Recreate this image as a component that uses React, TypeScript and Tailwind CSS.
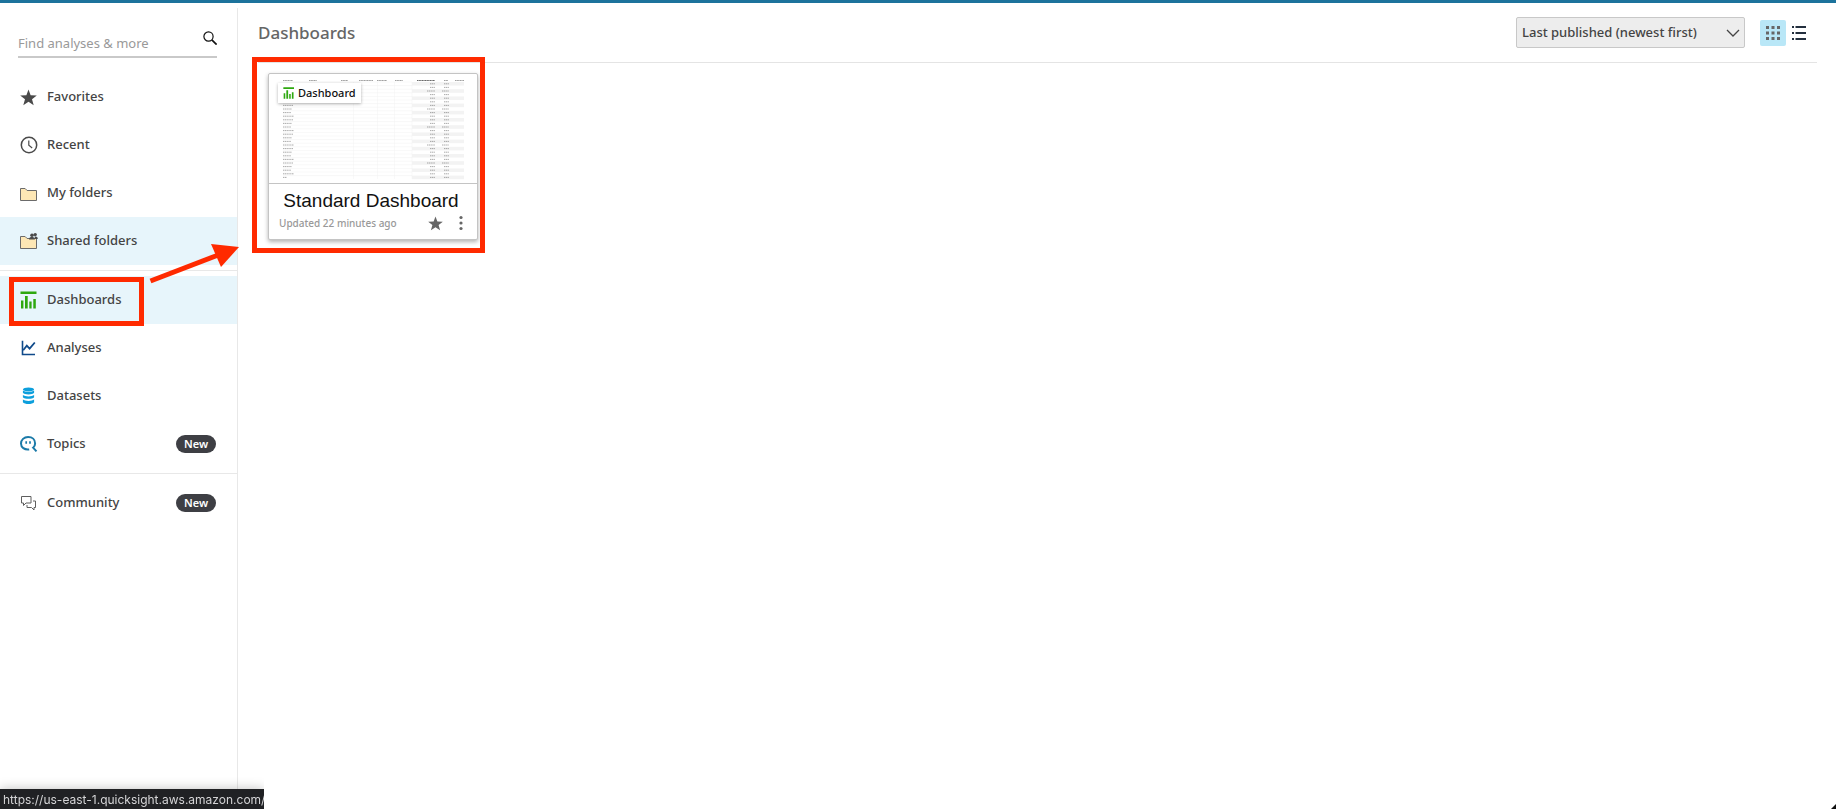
import { useState } from 'react'
import type { ReactNode } from 'react'
import clsx from 'clsx'

interface IconProps {
  className?: string
}

interface NavItem {
  label: string
  icon: ReactNode
  active?: boolean
  isNew?: boolean
  marked?: boolean
}

function StarIcon({ className }: IconProps) {
  return (
    <svg viewBox="0 0 16 16" className={className} fill="currentColor" aria-hidden="true">
      <path d="M8 .4l2 5.400 5.800.2-4.500 3.600 1.600 5.700L8 12.100l-4.900 3.200 1.600-5.700L.2 6l5.800-.2z" />
    </svg>
  )
}

function ClockIcon() {
  return (
    <svg viewBox="0 0 18 18" className="size-[18px]" fill="none" stroke="#4a4a4a" aria-hidden="true">
      <circle cx="9" cy="9" r="7.7" strokeWidth="1.5" />
      <path d="M8.8 4.5v4.8l3.4 2.6" strokeWidth="1.2" />
    </svg>
  )
}

function FolderIcon({ shared }: { shared?: boolean }) {
  return (
    <svg viewBox="0 0 18 18" className="size-[18px]" aria-hidden="true">
      <path d="M.5 4.500h4.600l2 2h9.400v10H.5z" fill="#fde7b5" stroke="#6b6b6b" strokeWidth="1" />
      {shared && (
        <g fill="#4a4a4a">
          <circle cx="12" cy="3.2" r="1.8" />
          <circle cx="15.2" cy="2.600" r="1.700" />
          <path d="M9 7.400c0-3.600 5.600-3.600 6 0zM14.400 4.800c2-.6 3.200.2 3.400 2.200h-2.400z" />
        </g>
      )}
    </svg>
  )
}

function DashboardIcon({ className }: IconProps) {
  return (
    <svg viewBox="0 0 18 18" className={className} fill="#2ea80f" aria-hidden="true">
      <path d="M.5.5h16v2.400H.5zM1 9.500h2.400v8H1zM5 4.900h2.700v12.600H5zM9.300 10.500h2.300v7H9.300zM13.300 7.900h2.500v9.600h-2.500z" />
    </svg>
  )
}

function AnalysisIcon() {
  return (
    <svg viewBox="0 0 18 18" className="size-[18px]" fill="none" stroke="#0f4a8a" aria-hidden="true">
      <path d="M2.500 1.800v13.700H15" strokeWidth="1.600" />
      <path d="M3.200 11.300l3.600-4.600 2.800 3 5.200-6.200" strokeWidth="1.800" />
    </svg>
  )
}

function DatasetIcon() {
  return (
    <svg viewBox="0 0 18 18" className="size-[18px]" fill="#0d9fdc" aria-hidden="true">
      <ellipse cx="8.500" cy="2.400" rx="5.600" ry="2" />
      <path d="M2.900 3.600c2 1.900 9.200 1.900 11.200 0v2.200c-1.400 2.200-9.800 2.200-11.200 0z" />
      <path d="M2.900 8c2 1.900 9.200 1.900 11.200 0v2.200c-1.400 2.200-9.800 2.200-11.200 0z" />
      <path d="M2.900 12.600c2 1.900 9.200 1.900 11.200 0v2.600c-1.400 2.400-9.800 2.400-11.200 0z" />
    </svg>
  )
}

function TopicIcon() {
  return (
    <svg viewBox="0 0 18 18" className="size-[18px]" fill="none" stroke="#1b7aa8" aria-hidden="true">
      <path d="M9.200 14.400c-4.800.6-8.200-2-8.200-5.900C1 4.800 4 2 8.100 2s7 2.700 7 6.400c0 1.700-.7 3.200-2 4.300l3.400 3.700" strokeWidth="2" />
      <path d="M6.200 6.300v2.400M10 6.300v2.400" strokeWidth="1.700" />
    </svg>
  )
}

function CommunityIcon() {
  return (
    <svg viewBox="0 0 18 18" className="size-[18px]" fill="none" stroke="#5f5f5f" strokeWidth="1" aria-hidden="true">
      <path d="M1.500 2.500h9.500v6.500H6L3.500 11.500V9h-2z" />
      <path d="M13 7h2.500v6.500H14V16l-2.500-2.500H7V11" />
    </svg>
  )
}

const LIBRARY: NavItem[] = [
  { label: 'Favorites', icon: <StarIcon className="size-[17px] mr-px text-[#4a4a4a]" /> },
  { label: 'Recent', icon: <ClockIcon /> },
  { label: 'My folders', icon: <FolderIcon /> },
  { label: 'Shared folders', icon: <FolderIcon shared />, active: true },
]

const ASSETS: NavItem[] = [
  { label: 'Dashboards', icon: <DashboardIcon className="size-[18px]" />, active: true, marked: true },
  { label: 'Analyses', icon: <AnalysisIcon /> },
  { label: 'Datasets', icon: <DatasetIcon /> },
  { label: 'Topics', icon: <TopicIcon />, isNew: true },
]

const COMMUNITY: NavItem[] = [{ label: 'Community', icon: <CommunityIcon />, isNew: true }]

function Arrow() {
  return (
    <svg viewBox="0 0 92 42" className="pointer-events-none absolute -top-8 left-[149px] z-10 h-[42px] w-[92px]" aria-hidden="true">
      <path d="M1.500 37L68 11.500" stroke="#ff2a00" strokeWidth="5" />
      <path d="M62 0l28 3-18 20z" fill="#ff2a00" />
    </svg>
  )
}

function NavGroup({ items }: { items: NavItem[] }) {
  return (
    <ul>
      {items.map(item => (
        <li key={item.label} className="relative">
          <a
            href="#"
            className={clsx(
              'flex h-12 items-center gap-[9px] pr-[21px] pl-5 text-[13px] font-medium text-[#444]',
              item.active && 'bg-[#e7f5fb]',
            )}
          >
            {item.icon}
            <span className="flex-1">{item.label}</span>
            {item.isNew && (
              <span className="flex h-[18px] w-10 items-center justify-center rounded-full bg-[#3e3f44] text-[11px] font-semibold text-white">
                New
              </span>
            )}
          </a>
          {item.marked && (
            <>
              <div className="pointer-events-none absolute top-px left-[9px] h-[49px] w-[135px] border-5 border-[#ff2a00]" />
              <Arrow />
            </>
          )}
        </li>
      ))}
    </ul>
  )
}

function Sidebar() {
  return (
    <aside className="mt-[5px] w-[238px] shrink-0 border-r border-[#e8e8e8]">
      <label className="mr-5 mb-[15px] ml-[18px] flex h-[50px] items-end border-b-2 border-[#c9c9c9] pb-[3px]">
        <input
          type="text"
          aria-label="Find analyses & more"
          placeholder="Find analyses & more"
          className="w-full min-w-0 flex-1 text-[13px] text-[#444] outline-none placeholder:text-[#999]"
        />
        <svg viewBox="0 0 14 14" className="mb-2 size-[14px] shrink-0" fill="none" stroke="#111" aria-hidden="true">
          <circle cx="5.500" cy="5.500" r="4.600" strokeWidth="1.200" />
          <path d="M8.800 8.800l4.800 4.800" strokeWidth="1.700" />
        </svg>
      </label>
      <nav>
        <NavGroup items={LIBRARY} />
        <hr className="my-[5px] border-[#e8e8e8]" />
        <NavGroup items={ASSETS} />
        <hr className="my-[5px] border-[#e8e8e8]" />
        <NavGroup items={COMMUNITY} />
      </nav>
    </aside>
  )
}

const ROWS = Array.from({ length: 27 }, (_, i) => i)

// [x, width] of the column headings in the preview
const HEADS = [
  [14, 10],
  [40, 8],
  [72, 7],
  [90, 14],
  [108, 10],
  [126, 8],
  [148, 18],
  [175, 4],
  [186, 9],
]

function Thumbnail() {
  return (
    <svg viewBox="0 0 208 109" className="block w-full" aria-hidden="true">
      <g stroke="#444" strokeWidth="1" strokeDasharray="1.300 0.300">
        {HEADS.map(([x, w]) => (
          <path key={x} d={`M${x} 6.500h${w}`} opacity={x === 148 ? 0.8 : 0.5} />
        ))}
      </g>
      {ROWS.map(i => {
        const y = 8 + i * 3.6
        const wide = i % 5 === 2
        return (
          <g key={i}>
            <path d={`M14 ${y}H143`} stroke="#f1f1f1" strokeWidth="0.500" />
            {i % 2 === 0 && <rect x="143" y={y} width="52" height="3.600" fill="#f3f3f3" />}
            <g stroke="#555" strokeWidth="0.900" strokeDasharray="1.300 0.500" opacity="0.550">
              <path d={`M14 ${y + 1.8}h${i === 26 ? 4 : 8 + ((i * 3) % 4)}`} opacity="1" />
              <path d={`M${wide ? 158 : 161} ${y + 1.8}H166`} />
              <path d={`M${wide ? 173 : 175} ${y + 1.8}H180`} />
            </g>
          </g>
        )
      })}
      <path d="M84.500 8v97M108.500 8v97M125.500 8v97M143 8v97" stroke="#f3f3f3" strokeWidth="0.500" />
    </svg>
  )
}

function DashboardCard() {
  return (
    <article className="relative w-[210px] rounded-xs border border-[#c4c4c4] bg-white shadow-[0_2px_4px_rgba(0,0,0,0.3)]">
      <div className="relative border-b border-[#c4c4c4]">
        <Thumbnail />
        <span className="absolute top-[9px] left-[9px] flex h-5 items-center gap-[3px] bg-white px-[5px] text-[11px] font-medium text-[#111] shadow-[0_1px_3px_rgba(0,0,0,0.3)]">
          <DashboardIcon className="size-3" />
          Dashboard
        </span>
      </div>
      <div className="px-[10px] pt-1 pb-[7px]">
        <h2 className="pr-1 text-center font-['Liberation_Sans',Arial,sans-serif] text-[19px] leading-[26px] whitespace-nowrap text-[#111]">
          Standard Dashboard
        </h2>
        <div className="flex h-[18px] items-center">
          <span className="flex-1 text-[10px] font-medium text-[#999]">Updated 22 minutes ago</span>
          <button type="button" aria-label="Favorite" className="mr-4 text-[#666]">
            <StarIcon className="size-[15px]" />
          </button>
          <button type="button" aria-label="More actions" className="mr-1">
            <svg viewBox="0 0 4 16" className="h-4 w-1" fill="#666" aria-hidden="true">
              <circle cx="2" cy="2.500" r="1.600" />
              <circle cx="2" cy="8" r="1.600" />
              <circle cx="2" cy="13.500" r="1.600" />
            </svg>
          </button>
        </div>
      </div>
      <div className="pointer-events-none absolute -top-[17px] -right-2 -bottom-[14px] -left-[17px] border-5 border-[#ff2a00]" />
    </article>
  )
}

function Toolbar() {
  const [view, setView] = useState<'grid' | 'list'>('grid')
  return (
    <header className="flex h-[60px] items-center border-b border-[#e4e4e4] pr-[5px]">
      <h1 className="flex-1 text-[17px] font-medium text-[#666]">Dashboards</h1>
      <div className="relative mr-[15px]">
        <select
          aria-label="Sort"
          className="block h-[31px] w-[229px] appearance-none rounded-xs border border-[#c8c8c8] bg-[#ededed] pl-[5px] text-[13px] font-medium text-[#444]"
        >
          <option>Last published (newest first)</option>
        </select>
        <svg viewBox="0 0 14 8" className="pointer-events-none absolute top-3 right-[5px] h-2 w-[14px]" fill="none" stroke="#444" strokeWidth="1.300" aria-hidden="true">
          <path d="M1 1l6 6 6-6" />
        </svg>
      </div>
      <button
        type="button"
        aria-label="Grid view"
        onClick={() => setView('grid')}
        className={clsx('flex size-[26px] items-center justify-center rounded-xs', view === 'grid' && 'bg-[#b9e7f7]')}
      >
        <svg viewBox="0 0 14 14" className="size-[14px]" fill="#666" aria-hidden="true">
          {[0, 5.5, 11].map(y => [0, 5.5, 11].map(x => <rect key={`${x}-${y}`} x={x} y={y} width="3" height="3" />))}
        </svg>
      </button>
      <button
        type="button"
        aria-label="List view"
        onClick={() => setView('list')}
        className={clsx('flex size-[26px] items-center justify-center rounded-xs', view === 'list' && 'bg-[#b9e7f7]')}
      >
        <svg viewBox="0 0 14 14" className="size-[14px]" fill="#232f3e" aria-hidden="true">
          <path d="M0 0h2v2H0zM3.500 0H14v2H3.500zM0 6h2v2H0zM3.500 6H14v2H3.500zM0 12h2v2H0zM3.500 12H14v2H3.500z" />
        </svg>
      </button>
    </header>
  )
}

function StatusBar() {
  return (
    <div className="pointer-events-none fixed bottom-0 left-0 w-[264px] overflow-hidden pt-4">
      <div className="h-5 bg-[#202124] pl-[3px] font-['Inter',sans-serif] text-xs leading-[22px] whitespace-nowrap text-[#d4d4d6] shadow-[0_0_12px_rgba(0,0,0,0.25)]">
        https://us-east-1.quicksight.aws.amazon.com/
      </div>
    </div>
  )
}

export default function App() {
  return (
    <div className="flex min-h-screen flex-col border-t-3 border-[#1c739c] bg-white font-['Noto_Sans','Open_Sans',sans-serif]">
      <div className="flex flex-1">
        <Sidebar />
        <main className="min-w-0 flex-1 pr-[19px] pl-5">
          <Toolbar />
          <div className="px-[10px] pt-[10px]">
            <DashboardCard />
          </div>
        </main>
      </div>
      <StatusBar />
      <svg viewBox="0 0 5 5" className="fixed right-0 bottom-0 size-[5px]" fill="#111" aria-hidden="true">
        <path d="M5 0v5H0z" />
      </svg>
    </div>
  )
}
